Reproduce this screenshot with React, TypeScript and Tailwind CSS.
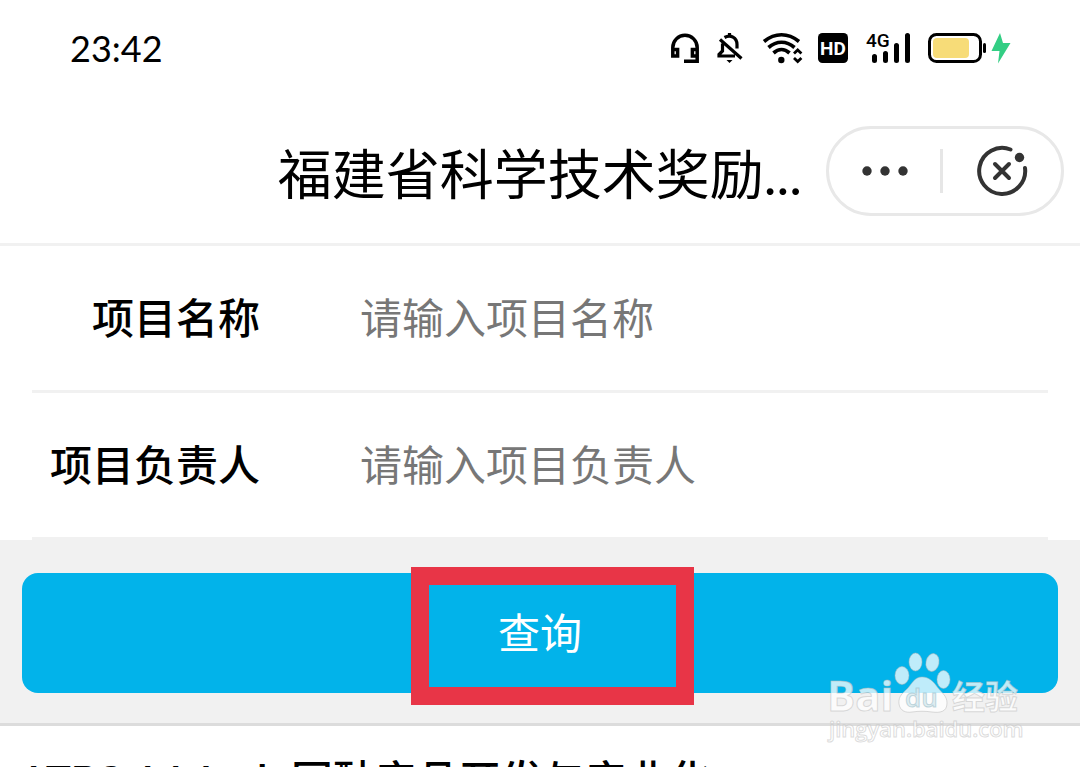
import type { ReactNode } from "react";

export default function App() {
  return (
    <div className="h-screen overflow-hidden bg-white font-['Noto_Sans_CJK_SC',sans-serif] text-black">
      <StatusBar />
      <TitleBar />
      <main>
        <form onSubmit={(e) => e.preventDefault()}>
          <div className="px-8">
            <Field id="project-name" label="项目名称" placeholder="请输入项目名称" />
            <Field id="project-leader" label="项目负责人" placeholder="请输入项目负责人" />
          </div>
          <div className="relative border-b-3 border-[#dcdcdc] bg-[#f1f1f1] px-[22px] pt-[33px] pb-[30px]">
            <button
              type="submit"
              className="block h-[120px] w-full rounded-2xl bg-[#02b3ea] pb-1 text-[42px] leading-none text-white"
            >
              查询
            </button>
            {/* highlight frame */}
            <div className="pointer-events-none absolute top-[27px] left-1/2 -ml-[129px] h-[138px] w-[283px] border-18 border-[#e83547]" />
            <Watermark />
          </div>
        </form>
        <h2 className="px-7 pt-7 font-[Roboto,'Noto_Sans_CJK_SC',sans-serif] text-[42px] leading-[56px] font-medium whitespace-nowrap">
          LTPS AA Inch 国酞产品开发与产业化
        </h2>
      </main>
    </div>
  );
}

function StatusBar() {
  return (
    <header className="flex h-24 items-center justify-between pr-[68px] pl-[70px]">
      <time className="font-[Lato,sans-serif] text-[36px] leading-none">23:42</time>
      <div className="flex items-center">
        <StatusIcons />
      </div>
    </header>
  );
}

function StatusIcons() {
  return (
    <svg width="344" height="44" viewBox="668 26 344 44" fill="none" stroke="#000" strokeWidth="3.5">
      {/* headset */}
      <path d="M672.8 55V47.5a12.2 12.2 0 0 1 24.4 0V61.2H684M672.8 49.5h4.8v6.5h-4.8zM697.2 49.5h-4.8v6.5h4.8z" />
      {/* muted bell */}
      <path
        d="M720 39.500 741.500 58.500M729.500 33v3M724.500 37.500c6-3.500 12.500 0 12.500 7v4M722.500 43.500V51l-3.500 3.500v1.500H735"
        strokeWidth="3.200"
      />
      <path d="M726.500 60h6l-3 3z" fill="#000" stroke="none" />
      {/* wifi */}
      <path d="M764 41.500c11-9 24-9 35 0M768.500 47.500c8-7 18-7 26 0M773.500 53c5-4.500 11-4.500 16 0" strokeWidth="3.700" />
      <circle cx="781.300" cy="60" r="3.200" fill="#000" stroke="none" />
      <path d="m794 53.500 3.700-3.500 3.700 3.500M794 58l3.700 3.500 3.700-3.500" strokeWidth="2.800" />
      {/* HD */}
      <rect x="818" y="33" width="30" height="30" rx="4.500" fill="#000" stroke="none" />
      <text x="833" y="55" textAnchor="middle" fill="#fff" stroke="none" className="font-[Roboto,sans-serif] text-[19px] font-bold">
        HD
      </text>
      {/* 4G signal */}
      <text x="866" y="47" fill="#000" stroke="none" className="font-[Roboto,sans-serif] text-[19px] font-medium">
        4G
      </text>
      <path d="M874.500 56.500v4M885.500 53.500v7M896.500 45.500v15M907.500 35.500v25" strokeWidth="5" strokeLinecap="round" />
      {/* battery */}
      <rect x="929.500" y="34.500" width="51" height="27" rx="7" strokeWidth="3" />
      <rect x="933" y="38" width="36" height="20" rx="4" fill="#f7dc78" stroke="none" />
      <path d="M984.500 44.500v7" strokeWidth="3" strokeLinecap="round" />
      <path d="m1000 33-8.500 18h8l-1.500 12.500L1010.500 43h-7.500z" fill="#33ce84" stroke="none" />
    </svg>
  );
}

function TitleBar() {
  return (
    <div className="flex h-[150px] items-center justify-end gap-6 border-b-3 border-[#f1f1f1] pt-0.5 pr-4">
      <h1 className="pt-1.5 text-[54px] leading-none whitespace-nowrap">
        福建省科学技术奖励<span className="font-[Lato,sans-serif]">...</span>
      </h1>
      <div className="flex h-[90px] w-[238px] items-center rounded-full border-3 border-[#e8e8e8]">
        <CapsuleButton label="更多" className="w-[111px]">
          <svg width="48" height="12" viewBox="0 0 48 12" fill="#333">
            <circle cx="6" cy="6" r="4.700" />
            <circle cx="24" cy="6" r="4.700" />
            <circle cx="42" cy="6" r="4.700" />
          </svg>
        </CapsuleButton>
        <span className="h-11 w-[3px] bg-[#e6e6e6]" />
        <CapsuleButton label="关闭" className="flex-1">
          <svg width="52" height="52" viewBox="0 0 52 52" fill="none" stroke="#333" strokeWidth="4" strokeLinecap="round">
            <path d="M34.500 4.500A23 23 0 1 0 49 23" />
            <path d="m19 19 14 14M33 19 19 33" />
            <circle cx="43.500" cy="12.500" r="4.700" fill="#333" stroke="none" />
          </svg>
        </CapsuleButton>
      </div>
    </div>
  );
}

function CapsuleButton({ label, className, children }: { label: string; className: string; children: ReactNode }) {
  return (
    <button type="button" aria-label={label} className={`flex h-full items-center justify-center ${className}`}>
      {children}
    </button>
  );
}

function Field({ id, label, placeholder }: { id: string; label: string; placeholder: string }) {
  return (
    <div className="flex h-[147px] items-center border-b-3 border-[#f1f1f1] pb-1">
      <label htmlFor={id} className="w-[228px] shrink-0 text-right text-[42px] leading-[60px] font-medium">
        {label}
      </label>
      <input
        id={id}
        type="text"
        placeholder={placeholder}
        className="ml-[100px] h-[60px] min-w-0 flex-1 text-[42px] leading-[60px] outline-none placeholder:text-[#777]"
      />
    </div>
  );
}

function Watermark() {
  return (
    <svg
      className="pointer-events-none absolute top-[108px] right-[52px]"
      width="204"
      height="100"
      viewBox="824 648 204 100"
      fill="#fff"
      fillOpacity="0.75"
      stroke="#b8b8b8"
      strokeOpacity="0.5"
      strokeWidth="1"
    >
      <text x="827" y="711" className="font-['Open_Sans',sans-serif] text-[42px] font-bold">Bai</text>
      <ellipse cx="902" cy="675.500" rx="7" ry="9" />
      <ellipse cx="915.500" cy="662" rx="6.500" ry="9" />
      <ellipse cx="932.500" cy="662.500" rx="6.500" ry="9" transform="rotate(12 932.500 662.500)" />
      <ellipse cx="943.500" cy="679.500" rx="6.500" ry="9" />
      <path d="M922 677c-7 0-9 5-14 11-5 5-10 8-9 16 1 7 7 9 13 8 7-1 13-1 20 0 8 1 15 0 15-9 0-7-5-10-9-15-5-7-9-11-16-11z" />
      <text
        x="905"
        y="707"
        fill="#d5e8ee"
        stroke="#8fb4c0"
        className="font-['Open_Sans',sans-serif] text-[26px] font-semibold"
      >
        du
      </text>
      <text x="952" y="709" className="font-['Noto_Sans_CJK_SC',sans-serif] text-[33px] font-bold">经验</text>
      <text x="829" y="737" className="font-['Open_Sans',sans-serif] text-[22px] font-semibold">jingyan.baidu.com</text>
    </svg>
  );
}
